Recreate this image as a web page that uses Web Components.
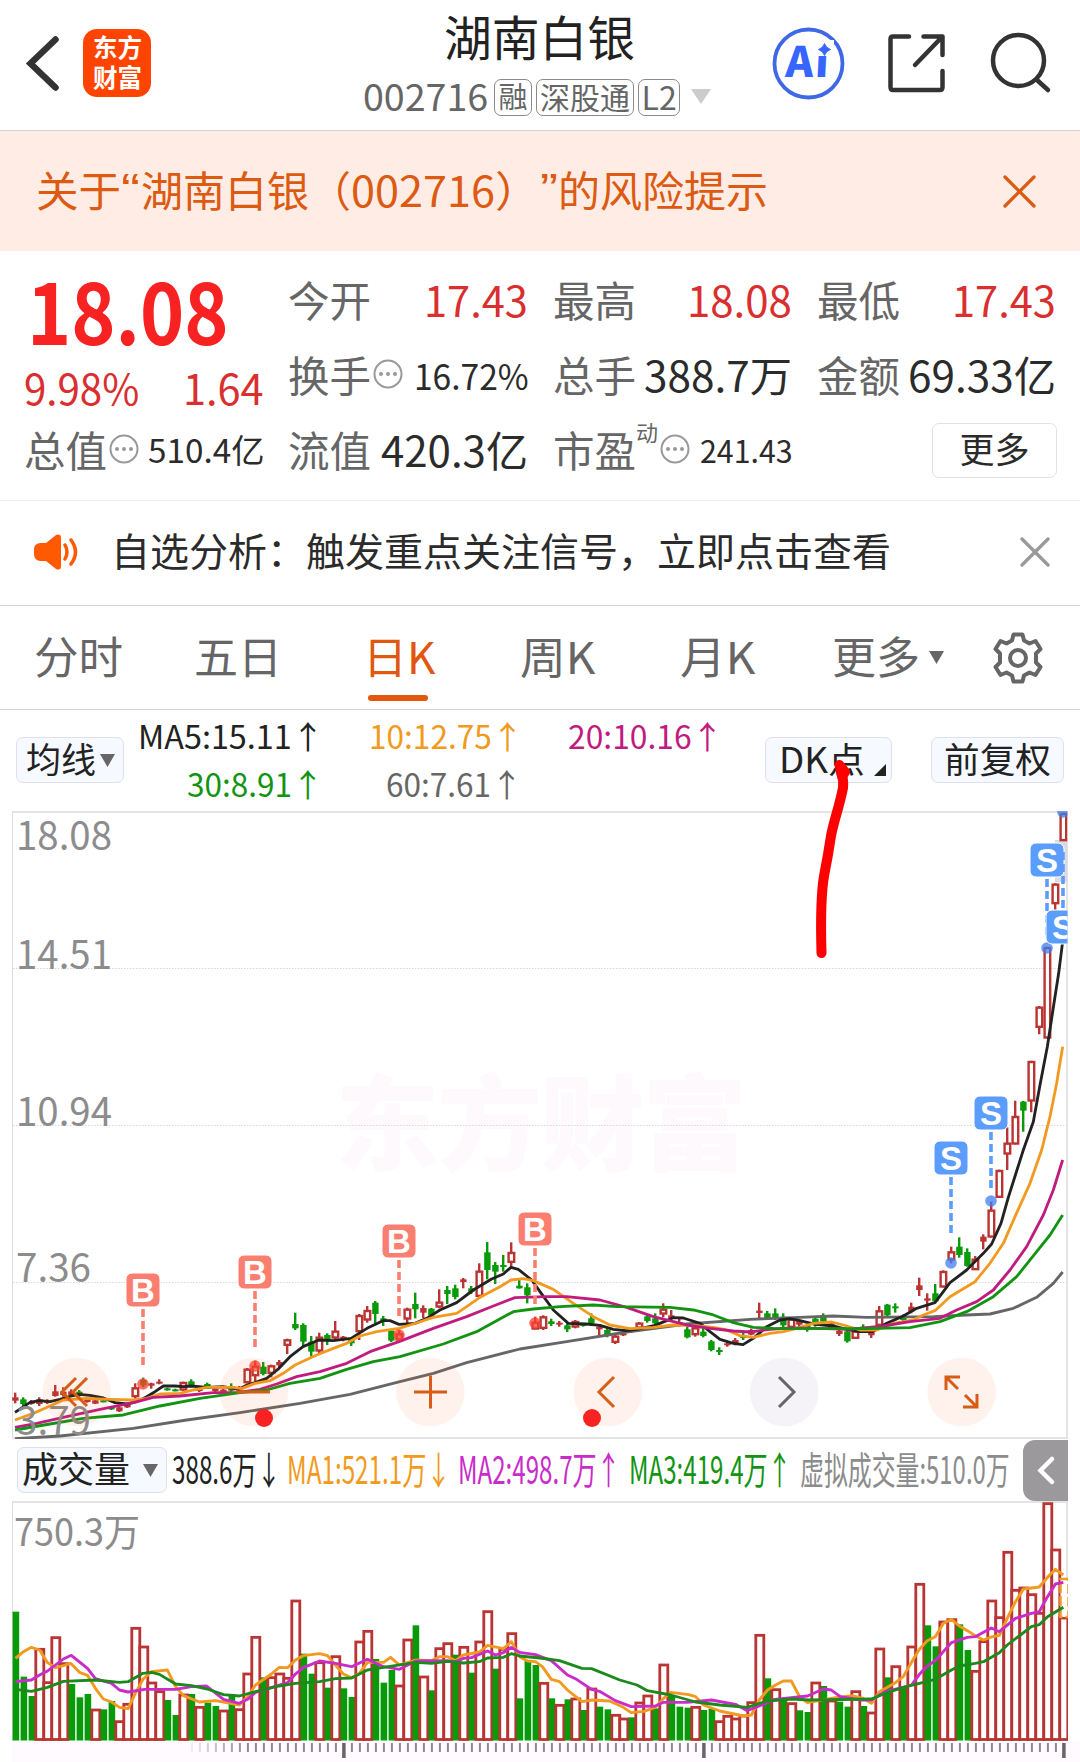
<!DOCTYPE html>
<html lang="zh-CN">
<head>
<meta charset="utf-8">
<title>湖南白银 002716</title>
<style>
    html, body {
        margin: 0;
        background: #fff;
    }
    body {
        position: relative;
        width: 1080px;
        height: 1762px;
        overflow: hidden;
        font-family: "Noto Sans CJK SC", sans-serif;
        color: #2b2b2b;
    }
</style>
</head>
<body>
<stock-header></stock-header>
<risk-banner></risk-banner>
<quote-panel></quote-panel>
<notice-bar>自选分析：触发重点关注信号，立即点击查看</notice-bar>
<period-tabs></period-tabs>
<ma-legend></ma-legend>
<price-chart></price-chart>
<volume-legend></volume-legend>
<volume-chart></volume-chart>
<pen-stroke></pen-stroke>

<script>
// Base class: puts the static markup of an element into its shadow root
class BaseElement extends HTMLElement {
    constructor() {
        super();
        this.attachShadow({mode: 'open'});
    }

    connectedCallback() {
        this.shadowRoot.innerHTML = this.render();
    }
}

// One line of text, stretched or condensed to a given width
class FitText extends HTMLElement {
    connectedCallback() {
        const shadow = this.attachShadow({mode: 'open'});
        const size = this.getAttribute('size');
        const width = this.getAttribute('width');
        shadow.innerHTML =
            `<style>
                :host {
                    display: block;
                    flex: none;
                    width: ${width}px;
                    height: ${size}px;
                    font-size: ${size}px;
                    line-height: ${size}px;
                    white-space: nowrap;
                    text-spacing-trim: space-all;
                }
                span {
                    display: inline-block;
                    transform-origin: 0 0;
                }
            </style>
            <span><slot></slot></span>`;
        const span = shadow.querySelector('span');
        const scale = width / span.offsetWidth;
        span.style.transform = `translateY(-.06em) scaleX(${scale})`;
    }
}

class StockTag extends BaseElement {
    render() {
        return `<style>
                :host {
                    display: flex;
                    justify-content: center;
                    align-items: center;
                    box-sizing: border-box;
                    height: 37px;
                    border: 1.5px solid #8a8a8a;
                    border-radius: 7px;
                    color: #666;
                }
            </style>
            <fit-text size="${this.getAttribute('size')}" width="${this.getAttribute('width')}">${this.getAttribute('text')}</fit-text>`;
    }
}

class StockHeader extends BaseElement {
    render() {
        return `<style>
                :host {
                    display: grid;
                    grid-template-columns: 83px 68px 1fr 73px 43px 58px 42px 92px;
                    box-sizing: border-box;
                    height: 131px;
                    border-bottom: 1px solid #d6d1d8;
                }
                svg { display: block; }
                .logo {
                    display: flex;
                    flex-direction: column;
                    align-items: center;
                    gap: 5px;
                    box-sizing: border-box;
                    height: 68px;
                    margin-top: 29px;
                    padding-top: 6px;
                    border-radius: 14px;
                    background: #ff4400;
                    color: #fff;
                    font-weight: 700;
                }
                .title {
                    display: flex;
                    flex-direction: column;
                    padding-left: 212px;
                }
                .name { margin: 14px 0 0 81px; color: #222; }
                .code {
                    display: flex;
                    align-items: center;
                    height: 37px;
                    margin-top: 17px;
                    color: #666;
                }
                .tri { margin: 0 0 2px 10px; }
            </style>
            <svg width="83" height="130"><path d="M55.500 39.500L30.500 63.500L55.500 87.500" fill="none" stroke="#333" stroke-width="6.500" stroke-linecap="round"/></svg>
            <div class="logo">
                <fit-text size="25" width="49">东方</fit-text>
                <fit-text size="25" width="49">财富</fit-text>
            </div>
            <div class="title">
                <fit-text class="name" size="48" width="191">湖南白银</fit-text>
                <div class="code">
                    <fit-text size="37" width="125">002716</fit-text>
                    <stock-tag style="width:38px;margin-left:6px" size="29" width="29" text="融"></stock-tag>
                    <stock-tag style="width:98px;margin-left:4px" size="30" width="90" text="深股通"></stock-tag>
                    <stock-tag style="width:42px;margin-left:4px" size="32" width="35" text="L2"></stock-tag>
                    <svg class="tri" width="22" height="15"><path d="M1 0H21L11 15Z" fill="#ccc"/></svg>
                </div>
            </div>
            <svg width="73" height="130">
                <circle cx="36.500" cy="63.500" r="34" fill="#fff" stroke="#3f68e6" stroke-width="3.800"/>
                <text x="13" y="77" transform="skewX(-3) translate(4 0)" font-family="Noto Sans CJK SC" font-size="42" font-weight="900" fill="#3666ff" textLength="43">Ai</text>
                <path d="M43 40H62V56H43Z" fill="#fff"/>
                <path d="M52.500 43.500Q54 48 58.500 49.500Q54 51 52.500 55.500Q51 51 46.500 49.500Q51 48 52.500 43.500Z" fill="#3666ff" stroke="#3666ff" stroke-width="1"/>
            </svg>
            <i></i>
            <svg width="58" height="130" fill="none" stroke="#333" stroke-width="4.500" stroke-linecap="round" stroke-linejoin="round">
                <path d="M21 36.500H5Q2.500 36.500 2.500 39V87Q2.500 90 5 90H52Q54.500 90 54.500 87V71M35.500 36.500H54.500V55M27 65L54 37"/>
            </svg>
            <i></i>
            <svg width="65" height="130" fill="none" stroke="#333" stroke-width="4.500" stroke-linecap="round">
                <circle cx="30.500" cy="60.500" r="25.500"/><path d="M49 80L60 90"/>
            </svg>`;
    }
}

class CloseIcon extends BaseElement {
    render() {
        const s = +this.getAttribute('size');
        return `<style>:host { display: block; } svg { display: block; }</style>
            <svg width="${s}" height="${s}"><path d="M2 2L${s - 2} ${s - 2}M${s - 2} 2L2 ${s - 2}" stroke="currentColor" stroke-width="3.300" stroke-linecap="round"/></svg>`;
    }
}

class RiskBanner extends BaseElement {
    render() {
        return `<style>
                :host {
                    display: flex;
                    align-items: center;
                    box-sizing: border-box;
                    height: 120px;
                    padding: 0 44px 0 36px;
                    background: #ffede5;
                    color: #dc5a12;
                }
                fit-text { margin-top: 1px; }
                .quote { font-family: "Liberation Sans"; }
                close-icon { margin-left: auto; }
            </style>
            <fit-text size="42" width="85">关于</fit-text>
            <fit-text class="quote" size="42" width="19">“</fit-text>
            <fit-text size="42" width="168" style="margin-left:1px">湖南白银</fit-text>
            <fit-text size="42" width="42">（</fit-text>
            <fit-text size="42" width="144">002716</fit-text>
            <fit-text size="42" width="45">）</fit-text>
            <fit-text class="quote" size="42" width="18">”</fit-text>
            <fit-text size="42" width="210">的风险提示</fit-text>
            <close-icon size="33"></close-icon>`;
    }
}

class InfoDot extends BaseElement {
    render() {
        return `<style>:host { display: block; flex: none; width: 30px; height: 30px; margin: 0 0 5px 2px; } svg { display: block; }</style>
            <svg width="30" height="30">
                <circle cx="15" cy="15" r="13.500" fill="none" stroke="#999" stroke-width="2"/>
                <g fill="#999"><circle cx="8" cy="15" r="2"/><circle cx="15" cy="15" r="2"/><circle cx="22" cy="15" r="2"/></g>
            </svg>`;
    }
}

// Label on the left, value on the right, optional info icon between them
class QuoteItem extends BaseElement {
    render() {
        const get = (name) => this.getAttribute(name);
        return `<style>
                :host {
                    display: flex;
                    align-items: center;
                    height: 75px;
                    color: ${get('color') || '#2b2b2b'};
                }
                .label { color: #666; }
                .value { margin: 0 ${get('size') ? 0 : 1}px 0 auto; }
                .sup { margin-bottom: 39px; color: #666; }
            </style>
            <fit-text class="label" size="42" width="83">${get('label')}</fit-text>
            ${get('sup') ? `<fit-text class="sup" size="22" width="22">${get('sup')}</fit-text>` : ''}
            ${this.hasAttribute('info') ? '<info-dot></info-dot>' : ''}
            <fit-text class="value" size="${get('size') || 42}" width="${get('width')}">${get('value')}</fit-text>`;
    }
}

class QuotePanel extends BaseElement {
    render() {
        return `<style>
                :host {
                    display: grid;
                    grid-template-columns: 240px 241px 240px 240px;
                    grid-template-rows: 75px 75px 75px;
                    column-gap: 24px;
                    box-sizing: border-box;
                    height: 250px;
                    padding: 13px 0 0 24px;
                    border-bottom: 1px solid #ececec;
                }
                .price { grid-row: span 2; color: #f82222; }
                .last { margin: 8px 0 0 3px; font-weight: 700; }
                .change {
                    display: flex;
                    justify-content: space-between;
                    margin-top: 13px;
                    color: #d92f2f;
                }
                .more {
                    display: flex;
                    align-items: center;
                    justify-content: center;
                    justify-self: end;
                    align-self: center;
                    box-sizing: border-box;
                    width: 125px;
                    height: 55px;
                    margin-bottom: 2px;
                    padding-bottom: 2px;
                    border: 1.500px solid #e3e0e6;
                    border-radius: 7px;
                }
            </style>
            <div class="price">
                <fit-text class="last" size="84" width="202">18.08</fit-text>
                <div class="change">
                    <fit-text size="42" width="115">9.98%</fit-text>
                    <fit-text size="42" width="81">1.64</fit-text>
                </div>
            </div>
            <quote-item label="今开" value="17.43" width="104" color="#d92f2f"></quote-item>
            <quote-item label="最高" value="18.08" width="105" color="#d92f2f"></quote-item>
            <quote-item label="最低" value="17.43" width="104" color="#d92f2f"></quote-item>
            <quote-item label="换手" info value="16.72%" size="35" width="115"></quote-item>
            <quote-item label="总手" value="388.7万" width="148"></quote-item>
            <quote-item label="金额" value="69.33亿" width="148"></quote-item>
            <quote-item label="总值" info value="510.4亿" size="33" width="116"></quote-item>
            <quote-item label="流值" value="420.3亿" width="147"></quote-item>
            <quote-item label="市盈" sup="动" info value="241.43" size="31" width="93"></quote-item>
            <div class="more"><fit-text size="35" width="70">更多</fit-text></div>`;
    }
}

class NoticeBar extends BaseElement {
    render() {
        return `<style>
                :host {
                    display: flex;
                    align-items: center;
                    box-sizing: border-box;
                    height: 105px;
                    padding: 0 30px 2px 34px;
                    border-bottom: 1px solid #d5d5d5;
                }
                svg { display: block; margin-right: 33px; }
                fit-text { margin-bottom: 2px; }
                close-icon { margin-left: auto; color: #999; }
            </style>
            <svg width="44" height="36">
                <path d="M6 9H12L22 1Q27 -1 27 4V32Q27 37 22 35L12 27H6Q0 26 0 20V15Q0 10 6 9Z" fill="#ff5a00"/>
                <path d="M31 11Q35 18 31 25M37 6Q46 18 37 30" fill="none" stroke="#ff5a00" stroke-width="3.500" stroke-linecap="round"/>
            </svg>
            <fit-text size="39" width="780">${this.textContent}</fit-text>
            <close-icon size="30"></close-icon>`;
    }
}

class PeriodTabs extends BaseElement {
    render() {
        return `<style>
                :host {
                    display: grid;
                    grid-template-columns: 160px 169px 157px 160px 152px 97px 62px 52px;
                    align-items: center;
                    box-sizing: border-box;
                    height: 104px;
                    padding-left: 34px;
                    border-bottom: 1px solid #d5d5d5;
                    color: #666;
                }
                svg { display: block; }
                .active {
                    display: flex;
                    flex-direction: column;
                    color: #e2560e;
                    padding-top: 22px;
                }
                .active::after {
                    content: "";
                    width: 60px;
                    height: 6px;
                    margin: 15px 0 0 5px;
                    border-radius: 3px;
                    background: #e2560e;
                }
            </style>
            <fit-text size="44" width="89">分时</fit-text>
            <fit-text size="44" width="88">五日</fit-text>
            <div class="active"><fit-text size="44" width="72">日K</fit-text></div>
            <fit-text size="44" width="75">周K</fit-text>
            <fit-text size="44" width="75">月K</fit-text>
            <fit-text size="44" width="88">更多</fit-text>
            <svg width="16" height="14"><path d="M0 0H15L7.500 13Z" fill="#666"/></svg>
            <svg width="54" height="54" viewBox="-27 -27 54 54" fill="none" stroke="#666" stroke-width="4" stroke-linejoin="round">
                <path d="M-4.500 -23.500H4.500L6 -17.500L11.500 -14.500L17.500 -17L22.500 -9L18 -4.500V4.500L22.500 9L17.500 17L11.500 14.500L6 17.500L4.500 23.500H-4.500L-6 17.500L-11.500 14.500L-17.500 17L-22.500 9L-18 4.500V-4.500L-22.500 -9L-17.500 -17L-11.500 -14.500L-6 -17.500Z"/>
                <circle r="8"/>
            </svg>`;
    }
}

class ToolButton extends BaseElement {
    render() {
        return `<style>
                :host {
                    display: flex;
                    align-items: center;
                    box-sizing: border-box;
                    height: 46px;
                    padding-bottom: 2px;
                    border: 1.500px solid #dfe0e8;
                    border-radius: 7px;
                    background: #f6f9ff;
                    color: #222;
                }
            </style>
            <slot></slot>`;
    }
}

class MaLegend extends BaseElement {
    render() {
        return `<style>
                :host {
                    display: grid;
                    grid-template-columns: 108px 200px 199px 200px 42px 127px 39px 133px;
                    box-sizing: border-box;
                    height: 101px;
                    padding-left: 16px;
                }
                tool-button { margin-top: 27px; }
                .pair {
                    display: flex;
                    flex-direction: column;
                    align-items: flex-end;
                    gap: 16px;
                    padding-top: 11px;
                }
            </style>
            <tool-button style="padding-left:9px">
                <fit-text size="35" width="70">均线</fit-text>
                <svg width="16" height="13" style="margin:2px 0 0 4px"><path d="M0 0H15L7.500 13Z" fill="#666"/></svg>
            </tool-button>
            <div class="pair">
                <fit-text size="32" width="186" style="color:#222">MA5:15.11↑</fit-text>
                <fit-text size="32" width="137" style="color:#129412">30:8.91↑</fit-text>
            </div>
            <div class="pair">
                <fit-text size="32" width="154" style="color:#f29a20">10:12.75↑</fit-text>
                <fit-text size="32" width="137" style="color:#666">60:7.61↑</fit-text>
            </div>
            <div class="pair">
                <fit-text size="32" width="155" style="color:#c01c80">20:10.16↑</fit-text>
            </div>
            <i></i>
            <tool-button style="padding-left:13px">
                <fit-text size="35" width="86">DK点</fit-text>
                <svg width="12" height="12" style="margin:22px 0 0 9px"><path d="M12 0V12H0Z" fill="#222"/></svg>
            </tool-button>
            <i></i>
            <tool-button style="padding-left:12px"><fit-text size="35" width="107">前复权</fit-text></tool-button>`;
    }
}

const UP = '#b93432';
const DOWN = '#089a08';

// x of the n-th trading day
const dayX = (n) => 15.2 + n * 8;

// direction, high, body top, body bottom, low (thirds of a pixel round the middle of the plot)
const candles = [
    'r 578 592 602 610', 'g 592 598 612 620', 'r 600 606 612 614', 'r 592 598 612 618', 'r 598 602 609 612',
    'r 555 574 588 590', 'r 562 575 585 590', 'r 568 574 586 590', 'g 570 575 585 590', 'r 598 598 606 608',
    'r 598 601 611 612', 'g 600 601 606 607', 'g 620 622 628 630', 'r 620 622 634 636', 'r 610 614 622 624',
    'r 550 562 590 596', 'g 533 540 556 562', 'r 548 550 557 566', 'r 538 545 551 553', 'g 563 565 571 572',
    'g 566 568 573 574', 'r 545 546 570 572', 'g 538 544 556 562', 'r 565 566 573 576', 'g 548 552 558 565',
    'r 563 565 573 578', 'r 566 569 577 580', 'g 550 558 572 578', 'r 558 562 572 574', 'r 504 506 548 550',
    'r 482 497 527 545', 'g 486 500 522 526', 'r 494 496 520 532', 'r 480 486 496 502', 'r 416 418 436 462',
    'g 338 372 385 390', 'g 370 375 425 440', 'g 408 425 455 470', 'r 398 410 453 460', 'g 400 405 420 435',
    'r 363 392 414 420', 'r 408 410 420 424', 'g 412 420 430 438', 'r 342 345 395 420', 'r 318 330 360 368',
    'g 303 308 342 370', 'g 348 355 362 378', 'g 388 392 422 426', 'r 390 400 420 424', 'r 323 326 357 370',
    'g 278 312 328 355', 'r 316 324 338 354', 'g 324 326 346 350', 'r 268 305 321 325', 'g 258 270 282 312',
    'g 254 265 291 298', 'r 234 238 246 265', 'g 258 265 275 282', 'r 190 212 289 290', 'g 126 157 210 238',
    'g 186 195 215 252', 'g 165 195 199 215', 'r 127 156 187 204', 'g 240 257 265 266', 'g 250 262 286 310',
    'r 350 365 387 388', 'r 346 349 385 390', 'g 356 364 372 378', 'r 363 368 374 380', 'g 370 376 388 396',
    'r 360 363 381 385', 'g 370 372 378 380', 'g 340 355 370 376', 'r 372 380 388 406', 'g 385 390 408 412',
    'r 402 407 427 432', 'r 388 400 406 408', 'r 385 388 396 398', 'r 366 368 384 388', 'g 343 349 363 368',
    'g 340 355 370 378', 'r 310 326 342 352', 'r 330 346 355 362', 'r 355 366 376 380', 'g 380 388 412 415',
    'r 378 382 404 410', 'g 380 395 408 412', 'g 420 424 450 454', 'g 442 450 456 465', 'r 425 430 436 440',
    'r 414 420 430 436', 'g 395 405 414 420', 'r 386 390 404 406', 'r 308 332 339 358', 'g 333 340 354 358',
    'g 325 340 352 360', 'g 340 350 376 382', 'r 354 356 382 384', 'r 360 362 374 380', 'g 372 376 390 395',
    'g 350 356 370 380', 'g 340 346 365 375', 'r 365 370 384 388', 'r 386 392 402 408', 'g 388 394 424 428',
    'r 388 392 415 416', 'g 373 380 390 394', 'r 390 396 406 414', 'r 318 331 376 378', 'g 312 314 346 348',
    'g 310 319 325 338', 'g 343 350 360 365', 'r 308 320 334 340', 'r 233 256 270 288', 'r 280 295 302 332',
    'g 252 280 304 306', 'r 211 213 261 262', 'r 140 154 180 190', 'g 112 140 165 173', 'g 145 156 198 200',
    'r 168 176 209 210', 'r 103 110 125 148', 'r 5 29 111 112', 'r -91 -90 -8 -7', 'r -218 -172 -138 -90',
    'r -298 -252 -168 -167', 'g -297 -295 -268 -205', 'r -418 -417 -297 -263', 'r -582 -580 -518 -497', 'r -760 -759 -486 -485',
    'r -950 -949 -889 -835', 'r -1162 -1161 -1078 -1077'
];

const priceLines = [
    ['#666', '45,716 180,708 400,685 560,660 720,638 900,610 1050,583 1197,546 1300,520 1400,488 1560,447 1700,425 1880,396 2060,372 2250,358 2400,352 2500,348 2600,352 2800,350 2900,345 2970,342 3040,325 3110,292 3160,250 3188,216'],
    ['#222', '45,637 90,607 117,602 150,605 180,598 213,588 237,583 270,586 310,594 345,608 381,612 410,605 440,590 465,575 490,558 525,558 550,560 573,558 621,562 669,560 717,568 741,555 765,548 800,535 837,505 870,470 909,440 957,420 1000,422 1053,415 1101,385 1149,362 1170,362 1197,373 1245,370 1280,355 1320,330 1370,308 1420,270 1475,237 1510,222 1533,202 1555,208 1595,240 1620,275 1660,330 1705,370 1760,372 1800,376 1840,388 1880,392 1910,388 1965,376 2000,362 2018,353 2050,354 2100,370 2130,395 2160,418 2200,430 2229,434 2260,415 2280,398 2300,380 2340,360 2370,356 2400,362 2440,372 2500,378 2540,388 2580,395 2617,395 2660,370 2710,348 2750,325 2805,308 2830,275 2850,248 2900,210 2950,160 2975,132 3003,70 3025,-8 3070,-150 3100,-235 3120,-345 3142,-460 3162,-590 3176,-680 3188,-775'],
    ['#f29a20', '45,660 100,640 150,618 190,600 260,595 330,598 400,600 440,595 480,582 540,580 580,570 620,562 700,562 725,566 765,550 810,542 850,520 885,495 950,465 1000,445 1040,430 1080,408 1130,395 1197,385 1240,372 1300,352 1370,340 1400,320 1440,292 1500,260 1533,240 1570,236 1600,242 1660,268 1720,310 1780,350 1830,375 1890,386 1960,382 2020,375 2080,376 2140,382 2180,390 2220,407 2260,412 2310,400 2350,395 2390,385 2440,370 2495,366 2530,375 2580,390 2630,390 2680,370 2740,360 2770,345 2805,332 2850,290 2925,245 2970,190 3010,130 3045,50 3090,-50 3125,-150 3150,-250 3170,-350 3188,-460'],
    ['#c01c80', '45,682 110,670 200,650 300,628 400,608 460,592 540,588 640,578 710,578 780,568 830,552 890,530 960,515 1040,490 1110,455 1197,425 1300,385 1400,350 1480,318 1545,293 1640,290 1700,290 1800,300 1880,322 1960,350 2060,375 2130,385 2200,393 2250,396 2310,388 2370,384 2450,385 2550,388 2650,378 2730,365 2820,355 2870,330 2930,305 2980,270 3030,210 3080,140 3130,45 3160,-30 3188,-120'],
    ['#129412', '45,690 150,672 250,655 370,645 480,618 600,595 720,578 800,570 870,550 960,535 1040,508 1120,485 1200,470 1330,432 1430,395 1540,335 1600,327 1680,320 1780,315 1850,320 2010,322 2080,330 2140,345 2200,368 2260,382 2320,385 2600,386 2730,383 2820,365 2900,335 2980,290 3050,230 3110,155 3150,105 3188,45']
];

// letter, x, box centre, dash start, dash end, dot
const signals = [
    ['B', 143, 479, 498, 554, 573], ['B', 255, 461, 480, 537, 555], ['B', 399, 430, 449, 505, 524], ['B', 535, 418, 437, 493, 512],
    ['S', 951, 347, 366, 422, 452], ['S', 991, 302, 321, 377, 390], ['S', 1047, 49, 68, 124, 137], ['S', 1063, 116, 41, 97, 1]
];

class PriceChart extends BaseElement {
    // The plot is 627px high; data value 0 lies 389px below its top edge
    drawCandles() {
        return candles.map((row, n) => {
            const [dir, ...values] = row.split(' ');
            const [high, top, bottom, low] = values.map((v) => 389 + v / 3);
            const x = dayX(n);
            const color = dir === 'r' ? UP : DOWN;
            const hollow = dir === 'r' && bottom - top > 5;
            const body = hollow
                ? `<rect x="${x - 2.6}" y="${top + 1}" width="5.6" height="${bottom - top - 1.5}" fill="#fff" stroke="${color}" stroke-width="2.4"/>`
                : `<rect x="${x - 3}" y="${top}" width="6.4" height="${Math.max(bottom - top, 2)}" fill="${color}"/>`;
            return `<path d="M${x} ${high}V${low}" stroke="${color}" stroke-width="2.400"/>${body}`;
        }).join('');
    }

    drawLines() {
        return priceLines.map(([color, points]) =>
            `<polyline points="${points}" stroke="${color}"/>`).join('');
    }

    drawSignals() {
        return signals.map(([letter, x, y, from, to, dot]) => {
            const color = letter === 'B' ? '#fb7f70' : '#5b9dfc';
            const dotColor = letter === 'B' ? '#ff4030' : '#3f7ff0';
            return `<path d="M${x} ${from}V${to}" stroke="${color}" stroke-width="3.600" stroke-dasharray="8 4"/>
                <circle cx="${x}" cy="${dot}" r="5.8" fill="${dotColor}" opacity=".75"/>
                <rect x="${x - 17}" y="${y - 17}" width="34" height="34" rx="6" fill="${color}" stroke="#fff" stroke-width="1"/>
                <text x="${x}" y="${y + 12}" text-anchor="middle" class="mark">${letter}</text>`;
        }).join('');
    }

    drawButtons() {
        const shapes = [
            ['M76 -14L62 0L76 14M87 -14L73 0L87 14', 76.7],
            ['M237 0H270', 254],
            ['M414 0H447M430.500 -16.500V16.500', 430.3],
            ['M614 -15L599 0L614 15', 607.7],
            ['M779 -15L794 0L779 15', 784.3],
            ['M946 -2V-15H960M947 -14L958 -3M963 15H977V2M976 14L965 3', 961.7]
        ];
        return shapes.map(([d, x], n) =>
            `<circle cx="${x}" cy="0" r="34.300" fill="${n === 4 ? 'rgba(120,70,150,.07)' : 'rgba(255,90,30,.08)'}"/>
            <path d="${d}" fill="none" stroke="${n === 4 ? '#666' : '#d75c16'}" stroke-width="3"/>`).join('');
    }

    render() {
        const labels = [['18.08', 39], ['14.51', 158], ['10.94', 314.5], ['7.36', 471], ['3.79', 623.5]];
        return `<style>
                :host { display: block; height: 628px; }
                svg { display: block; }
                text { font-family: "Noto Sans CJK SC", sans-serif; }
                .mark { font: bold 33px "Liberation Sans"; fill: #fff; }
            </style>
            <svg width="1080" height="628">
                <defs><clipPath id="plot"><rect x="12" y="0" width="1055.500" height="628"/></clipPath></defs>
                <text x="335" y="352" font-size="104" font-weight="900" fill="#fdf9fd" textLength="412">东方财富</text>
                <path d="M13 157.500H1066M13 314.500H1066M13 471.500H1066" stroke="#d8d8d8" stroke-dasharray="1.500 1.500"/>
                <path d="M12.500 0V627" stroke="#ddd"/>
                <path d="M12 1H1068M12 627H1068M1067 0V627" stroke="#e4e4e4" stroke-width="2"/>
                <g clip-path="url(#plot)">
                    <rect x="1055" y="29" width="13" height="42" fill="#dcd9e2"/>
                    ${this.drawCandles()}
                    <g transform="translate(0 389) scale(.33333)" fill="none" stroke-width="8.500" stroke-linejoin="round">${this.drawLines()}</g>
                    ${this.drawSignals()}
                </g>
                <g fill="#8c8c8c" font-size="39">
                    ${labels.map(([t, y]) => `<text x="16" y="${y}" textLength="${t.length * 21 - 9}" lengthAdjust="spacingAndGlyphs">${t}</text>`).join('')}
                </g>
                <g transform="translate(0 581)">${this.drawButtons()}</g>
                <circle cx="264" cy="607" r="9" fill="#f82222"/>
                <circle cx="592" cy="607" r="9" fill="#f82222"/>
            </svg>`;
    }
}

class VolumeLegend extends BaseElement {
    render() {
        return `<style>
                :host {
                    display: grid;
                    grid-template-columns: 150px 5px 115px 171px 171px 171px 223px 45px;
                    align-items: center;
                    height: 62px;
                    padding-left: 17px;
                }
                svg { display: block; }
                .toggle { height: 61px; border-radius: 12px 0 0 12px; background: #9c999c; }
            </style>
            <tool-button style="padding-left:4px">
                <fit-text size="36" width="108">成交量</fit-text>
                <svg width="16" height="13" style="margin:2px 0 0 13px"><path d="M0 0H15L7.500 13Z" fill="#666"/></svg>
            </tool-button>
            <i></i>
            <fit-text size="38" width="109" style="color:#222">388.6万↓</fit-text>
            <fit-text size="38" width="164" style="color:#f29a20">MA1:521.1万↓</fit-text>
            <fit-text size="38" width="163" style="color:#c92cc9">MA2:498.7万↑</fit-text>
            <fit-text size="38" width="163" style="color:#129412">MA3:419.4万↑</fit-text>
            <fit-text size="38" width="210" style="color:#8c8c8c">虚拟成交量:510.0万</fit-text>
            <div class="toggle"><svg width="45" height="61"><path d="M29 19L17.500 30.500L29 42" fill="none" stroke="#fff" stroke-width="4.500" stroke-linecap="round"/></svg></div>`;
    }
}

// direction and top of each bar
const volumes = ('g365 g560 g618 r475 r575 r440 r518 g582 g622 g612 r657 g658 g633 r692 r640 r412 r468 r576 r602 g630 ' +
    'g675 r612 g612 r649 g638 g648 r660 g614 r656 r549 r439 g562 r560 r549 r562 r330 g491 g551 r515 g593 ' +
    'r497 g595 g621 r453 r421 g507 g578 g540 r585 r447 g406 r558 g601 r473 r458 g494 r469 g548 r453 r362 ' +
    'g536 r475 r428 g625 g510 g525 r577 g625 r643 g628 r624 g660 r594 g650 g658 r673 r684 g682 r636 r615 ' +
    'g655 r522 g615 g650 g653 r649 g660 g656 r692 r676 r684 r675 r635 r433 g565 r596 g625 r638 g661 g666 ' +
    'r576 g588 r630 g635 g650 r602 g648 r666 r474 g562 r527 g590 r468 r280 g406 g469 r393 r386 g403 g480 ' +
    'r541 r452 r330 r380 r184 r298 r291 r311 r367 r38 r177 r381').split(' ');

const volumeLines = [
    ['#f29a20', '45,505 68,485 91,472 115,480 138,518 161,533 184,527 205,520 231,547 254,556 277,595 300,627 324,636 347,652 372,656 393,610 415,568 440,545 486,540 510,590 533,617 579,636 626,632 695,645 719,620 742,585 788,552 811,532 835,533 858,510 881,497 928,491 951,497 974,525 997,552 1021,563 1044,550 1067,517 1114,517 1134,502 1160,525 1183,518 1207,510 1253,512 1276,500 1300,500 1323,512 1346,495 1392,486 1416,466 1462,476 1485,455 1509,500 1532,513 1555,515 1575,530 1601,568 1625,575 1648,600 1690,635 1720,630 1770,633 1810,652 1833,668 1870,664 1903,652 1927,625 1948,607 2000,614 2020,620 2043,645 2090,663 2160,678 2182,675 2205,630 2229,600 2252,585 2275,573 2298,573 2322,620 2345,638 2430,622 2475,617 2507,625 2531,640 2554,605 2600,578 2623,560 2647,517 2670,478 2693,452 2716,440 2740,400 2763,388 2786,408 2809,422 2832,437 2856,450 2879,441 2902,436 2925,385 2949,335 2972,297 3018,291 3042,262 3065,238 3088,255'],
    ['#c92cc9', '45,575 91,570 115,555 138,543 184,507 207,496 254,535 277,566 324,580 347,600 372,606 420,598 510,598 556,590 600,588 649,628 695,640 719,628 742,607 835,578 858,552 881,533 928,513 974,520 1021,530 1067,508 1114,530 1160,538 1207,513 1300,512 1323,515 1346,505 1369,503 1416,483 1439,495 1462,488 1485,472 1509,487 1555,494 1601,512 1648,555 1671,566 1718,598 1741,604 1787,632 1833,650 1903,648 1927,637 1996,637 2066,630 2136,643 2170,662 2205,648 2250,628 2345,618 2391,597 2414,600 2440,620 2500,630 2531,630 2570,605 2623,592 2647,585 2670,553 2693,528 2716,512 2763,458 2809,442 2832,440 2879,414 2902,425 2949,385 2995,370 3018,365 3042,320 3065,282 3088,277'],
    ['#1d891d', '45,598 91,604 138,592 184,574 277,570 347,577 372,575 415,550 440,547 463,553 510,582 556,587 602,597 649,614 695,618 742,605 811,588 858,580 928,575 974,566 1021,564 1067,540 1114,532 1207,517 1253,520 1300,514 1346,519 1392,515 1416,504 1462,502 1485,491 1509,498 1568,504 1625,512 1690,535 1718,536 1800,570 1850,585 1880,602 1948,615 2020,636 2090,645 2170,652 2229,633 2300,627 2350,630 2531,627 2570,610 2623,592 2670,580 2716,568 2763,540 2786,528 2832,520 2856,515 2902,488 2925,465 2995,410 3018,404 3042,380 3088,352']
];

class VolumeChart extends BaseElement {
    drawBars() {
        return volumes.map((row, n) => {
            const y = row.slice(1) / 3 - 11;
            const x = dayX(n);
            return row[0] === 'r'
                ? `<rect x="${x - 3.4}" y="${y + 1}" width="8" height="${237.5 - y}" fill="#fff" stroke="${UP}" stroke-width="2.8"/>`
                : `<rect x="${x - 2.6}" y="${y}" width="6.6" height="${239.500 - y}" fill="${DOWN}"/>`;
        }).join('');
    }

    drawTicks() {
        let ticks = '';
        for (let n = 22; n < 132; n++) {
            const major = n === 41 || n === 86 || n === 131;
            const opacity = Math.min(1, (n - 21) / 8);
            ticks += `<path d="M${dayX(n) + .7} 242V${major ? 257 : 251}" stroke="${major ? '#666' : '#8a8a8a'}" stroke-width="${major ? 3.5 : 2}" opacity="${opacity}"/>`;
        }
        return ticks;
    }

    render() {
        return `<style>
                :host { display: block; height: 261px; }
                svg { display: block; }
            </style>
            <svg width="1080" height="261">
                <defs><clipPath id="bars"><rect x="12" y="0" width="1056" height="241"/></clipPath></defs>
                <rect x="12" y="241" width="1068" height="20" fill="#fffaff"/>
                <path d="M12.500 0V240" stroke="#ddd"/>
                <path d="M12 1H1068M1067 0V240" stroke="#e4e4e4" stroke-width="2"/>
                <text x="14" y="45" font-family="Noto Sans CJK SC" font-size="38" fill="#8c8c8c" textLength="126" lengthAdjust="spacingAndGlyphs">750.3万</text>
                <g clip-path="url(#bars)">
                    ${this.drawBars()}
                    <rect x="1060.500" y="78" width="8" height="38" fill="#fff" stroke="#f29a20" stroke-width="2.500" stroke-dasharray="10 3"/>
                    <g transform="translate(0 -11) scale(.34435 .33333)" fill="none" stroke-width="8.500" stroke-linejoin="round">
                        ${volumeLines.map(([color, points]) => `<polyline points="${points}" stroke="${color}"/>`).join('')}
                    </g>
                </g>
                ${this.drawTicks()}
            </svg>`;
    }
}

// Hand-drawn mark that lies over the DK button and the chart
class PenStroke extends BaseElement {
    render() {
        return `<style>
                :host { position: absolute; left: 800px; top: 750px; pointer-events: none; }
                svg { display: block; }
            </style>
            <svg width="70" height="220" fill="none" stroke="#f00" stroke-width="10" stroke-linecap="round" stroke-linejoin="round">
                <path d="M39.500 15L45 22L42 26Z"/>
                <path d="M41 22Q44 30 43 38C39 58 34 70 31 86Q28 106 24 126Q20 150 21.500 203"/>
            </svg>`;
    }
}

customElements.define('fit-text', FitText);
customElements.define('stock-tag', StockTag);
customElements.define('close-icon', CloseIcon);
customElements.define('info-dot', InfoDot);
customElements.define('tool-button', ToolButton);
customElements.define('stock-header', StockHeader);
customElements.define('risk-banner', RiskBanner);
customElements.define('quote-item', QuoteItem);
customElements.define('quote-panel', QuotePanel);
customElements.define('notice-bar', NoticeBar);
customElements.define('period-tabs', PeriodTabs);
customElements.define('ma-legend', MaLegend);
customElements.define('price-chart', PriceChart);
customElements.define('volume-legend', VolumeLegend);
customElements.define('volume-chart', VolumeChart);
customElements.define('pen-stroke', PenStroke);
</script>
</body>
</html>
